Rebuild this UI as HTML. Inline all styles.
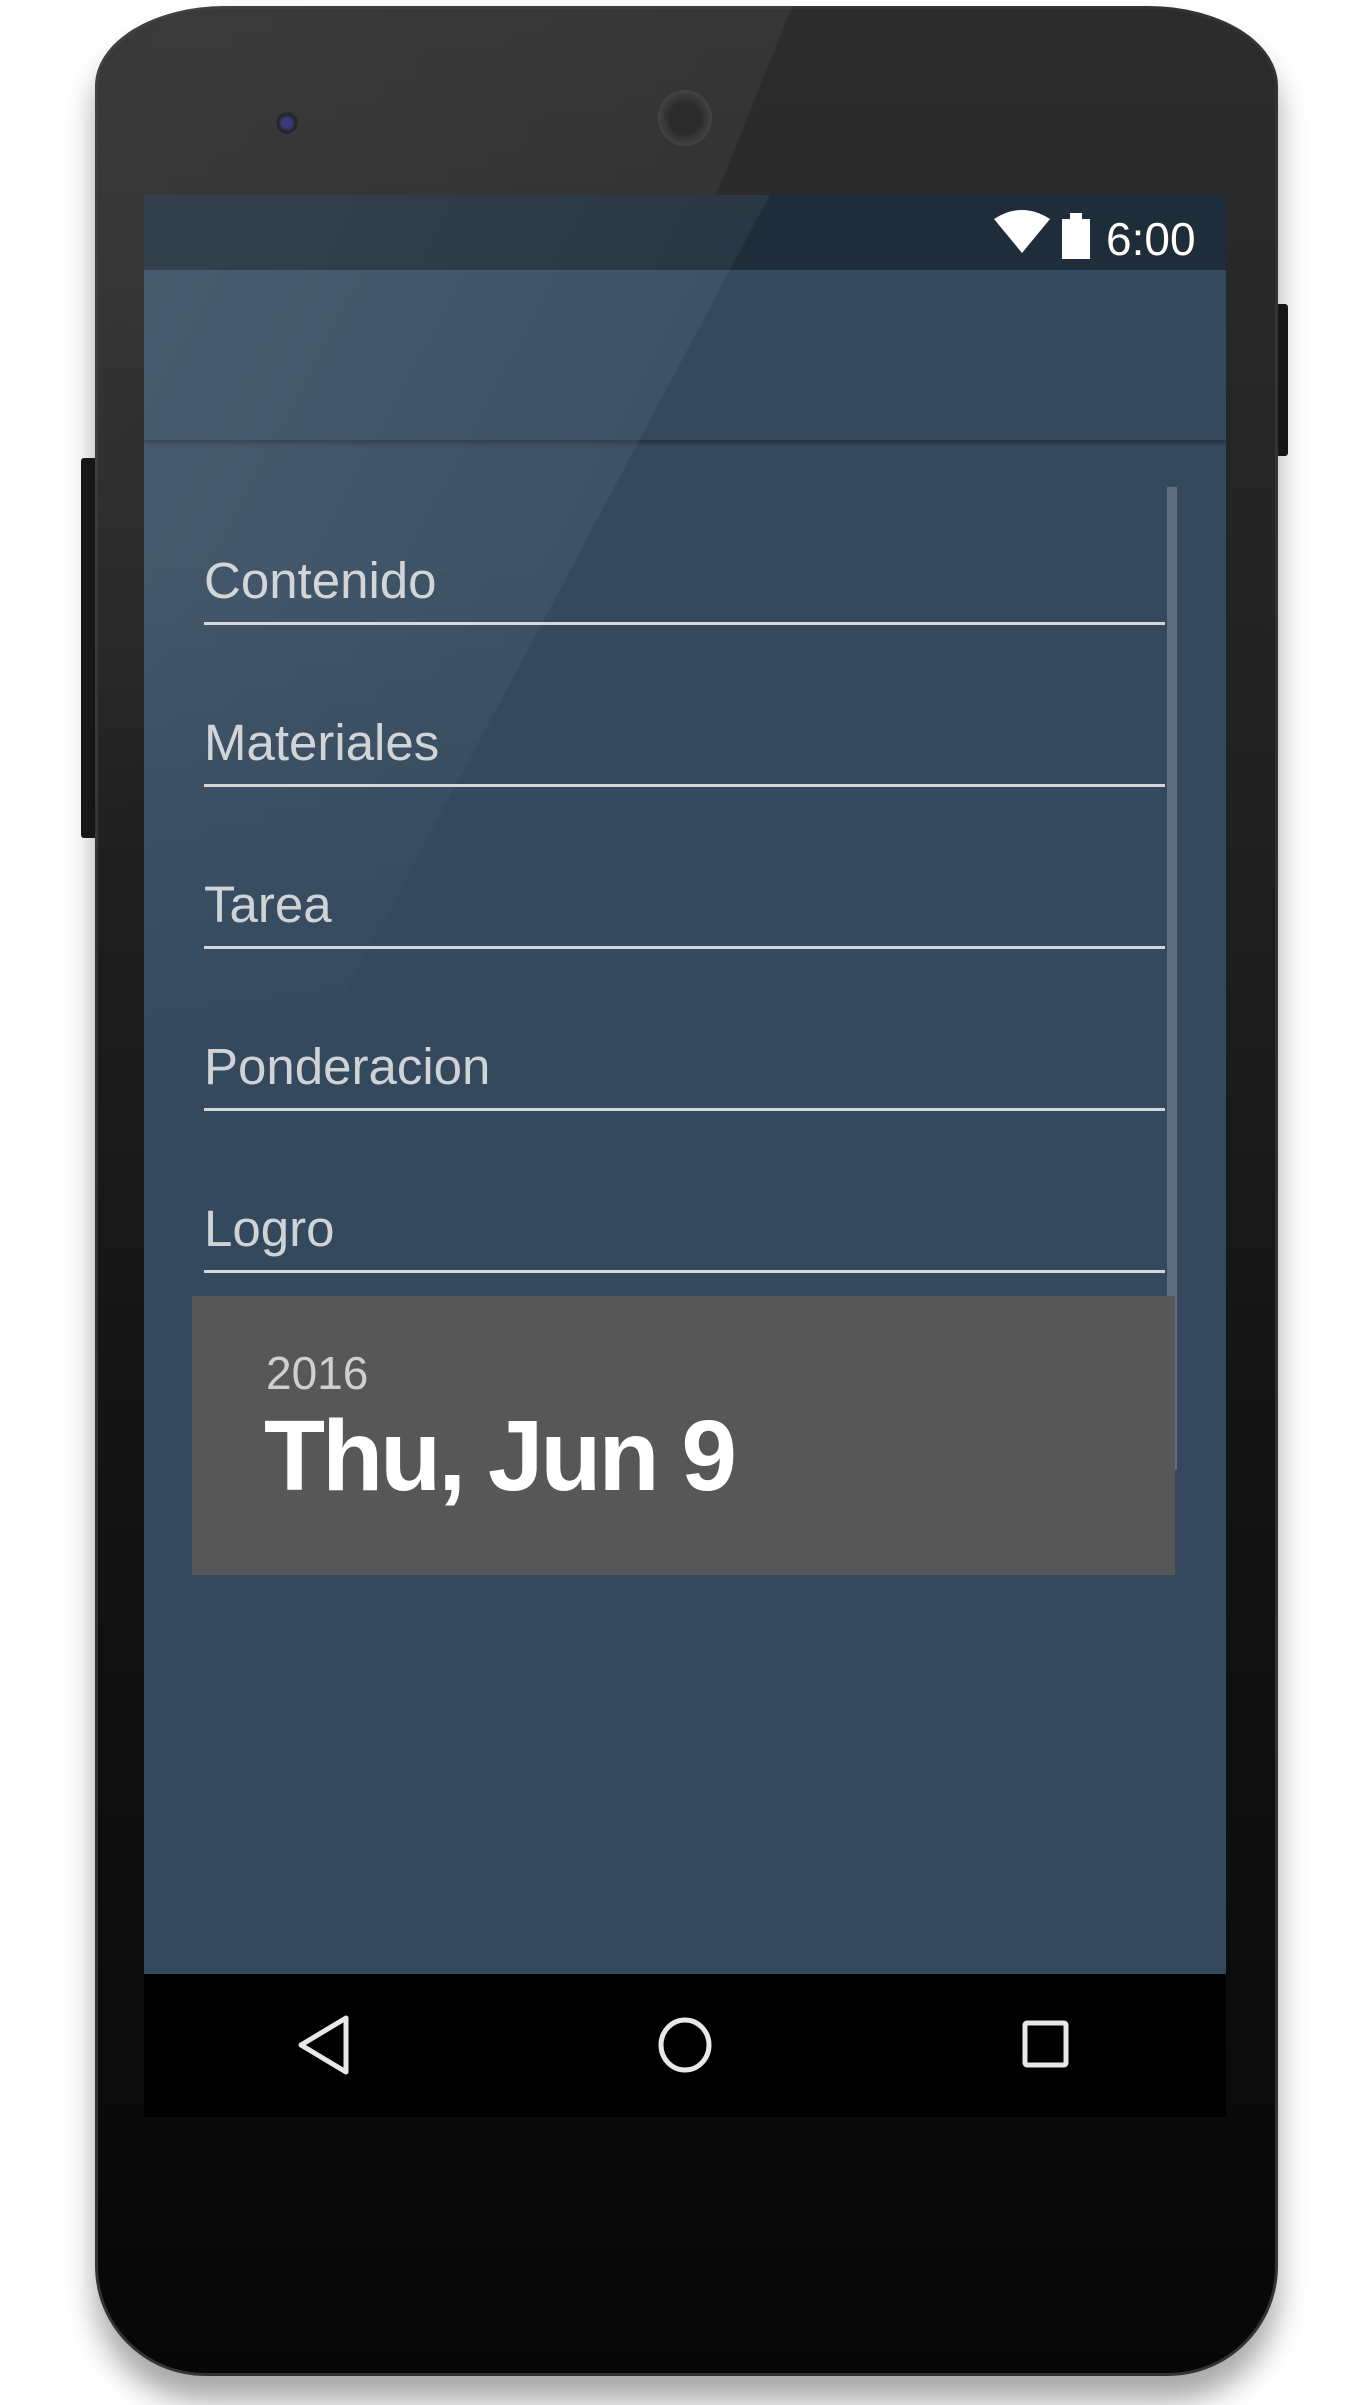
<!DOCTYPE html>
<html><head><meta charset="utf-8"><style>
*{margin:0;padding:0;box-sizing:border-box}
html,body{width:1370px;height:2405px;background:#fff;overflow:hidden;font-family:"Liberation Sans",sans-serif}
.abs{position:absolute}
.phone{left:95px;top:6px;width:1183px;height:2370px;border-radius:130px 130px 110px 110px / 80px 80px 110px 110px;background:linear-gradient(180deg,#2c2c2c 0%,#222 30%,#141414 60%,#070707 100%);box-shadow:0 25px 30px rgba(0,0,0,.35);border:3px solid #333}
.glare{left:95px;top:6px;width:1183px;height:900px;border-radius:130px 130px 0 0/80px 80px 0 0;background:linear-gradient(112deg,rgba(255,255,255,.07) 0%,rgba(255,255,255,.05) 45%,rgba(0,0,0,0) 45.2%);-webkit-mask-image:linear-gradient(180deg,#000 30%,transparent 100%);mask-image:linear-gradient(180deg,#000 30%,transparent 100%)}
.screen{left:144px;top:195px;width:1082px;height:1922px;background:#34495e;overflow:hidden}
.field{position:absolute;left:60px;width:961px;border-bottom:3px solid #d4d6d8;color:#d0d3d6;font-size:51px;padding-bottom:12px}
</style></head><body>
<div class="abs" style="left:81px;top:458px;width:16px;height:380px;background:#1a1a1a;border-radius:3px"></div>
<div class="abs" style="left:1276px;top:304px;width:12px;height:152px;background:#1a1a1a;border-radius:3px"></div>
<div class="abs phone"></div>
<div class="abs glare"></div>
<div class="abs" style="left:658px;top:90px;width:54px;height:56px;border-radius:50%;background:radial-gradient(#2b2b2b 40%,#444 70%,#222)"></div>
<div class="abs" style="left:276px;top:112px;width:22px;height:22px;border-radius:50%;background:radial-gradient(#3a3a7a 30%,#222 60%,#555)"></div>
<div class="abs screen">
  <div class="abs" style="left:0;top:0;width:1082px;height:75px;background:#1f2d3a"></div>
  <div class="abs" style="left:0;top:75px;width:1082px;height:170px;background:#34495e;box-shadow:0 3px 4px rgba(0,0,0,.3)"></div>
  <svg class="abs" style="left:848px;top:10px" width="234" height="60">
    <path d="M2 14 Q30 -4 58 14 L30 48 Z" fill="#fff"/>
    <rect x="70" y="14" width="28" height="40" fill="#fff"/><rect x="78" y="8" width="12" height="7" fill="#fff"/>
    <text x="114" y="50" font-size="46" fill="#fff" font-family="Liberation Sans">6:00</text>
  </svg>
  <div class="abs" style="left:1023px;top:292px;width:10px;height:983px;background:#5d6f80"></div>
  <div class="field" style="top:356px">Contenido</div>
  <div class="field" style="top:518px">Materiales</div>
  <div class="field" style="top:680px">Tarea</div>
  <div class="field" style="top:842px">Ponderacion</div>
  <div class="field" style="top:1004px">Logro</div>
  <div class="abs" style="left:48px;top:1101px;width:983px;height:279px;background:#575757">
    <div class="abs" style="left:74px;top:50px;color:#cfcfcf;font-size:46px">2016</div>
    <div class="abs" style="left:72px;top:103px;color:#fff;font-size:100px;font-weight:bold;letter-spacing:-3px">Thu, Jun 9</div>
  </div>
  <div class="abs" style="left:0;top:0;width:1082px;height:900px;background:linear-gradient(118deg,rgba(255,255,255,.1) 0%,rgba(255,255,255,.05) 40%,rgba(255,255,255,0) 40.2%);-webkit-mask-image:linear-gradient(180deg,#000 40%,transparent 100%);mask-image:linear-gradient(180deg,#000 40%,transparent 100%)"></div>
  <div class="abs" style="left:0;top:1779px;width:1082px;height:143px;background:#000">
    <svg class="abs" style="left:0;top:0" width="1082" height="143">
      <path d="M202 44 L202 98 L157 71 Z" fill="none" stroke="#e8e8e8" stroke-width="5" stroke-linejoin="round"/>
      <ellipse cx="541" cy="71" rx="24" ry="25" fill="none" stroke="#e8e8e8" stroke-width="5"/>
      <rect x="881" y="49" width="41" height="42" rx="2" fill="none" stroke="#e8e8e8" stroke-width="5"/>
    </svg>
  </div>
</div>
</body></html>
